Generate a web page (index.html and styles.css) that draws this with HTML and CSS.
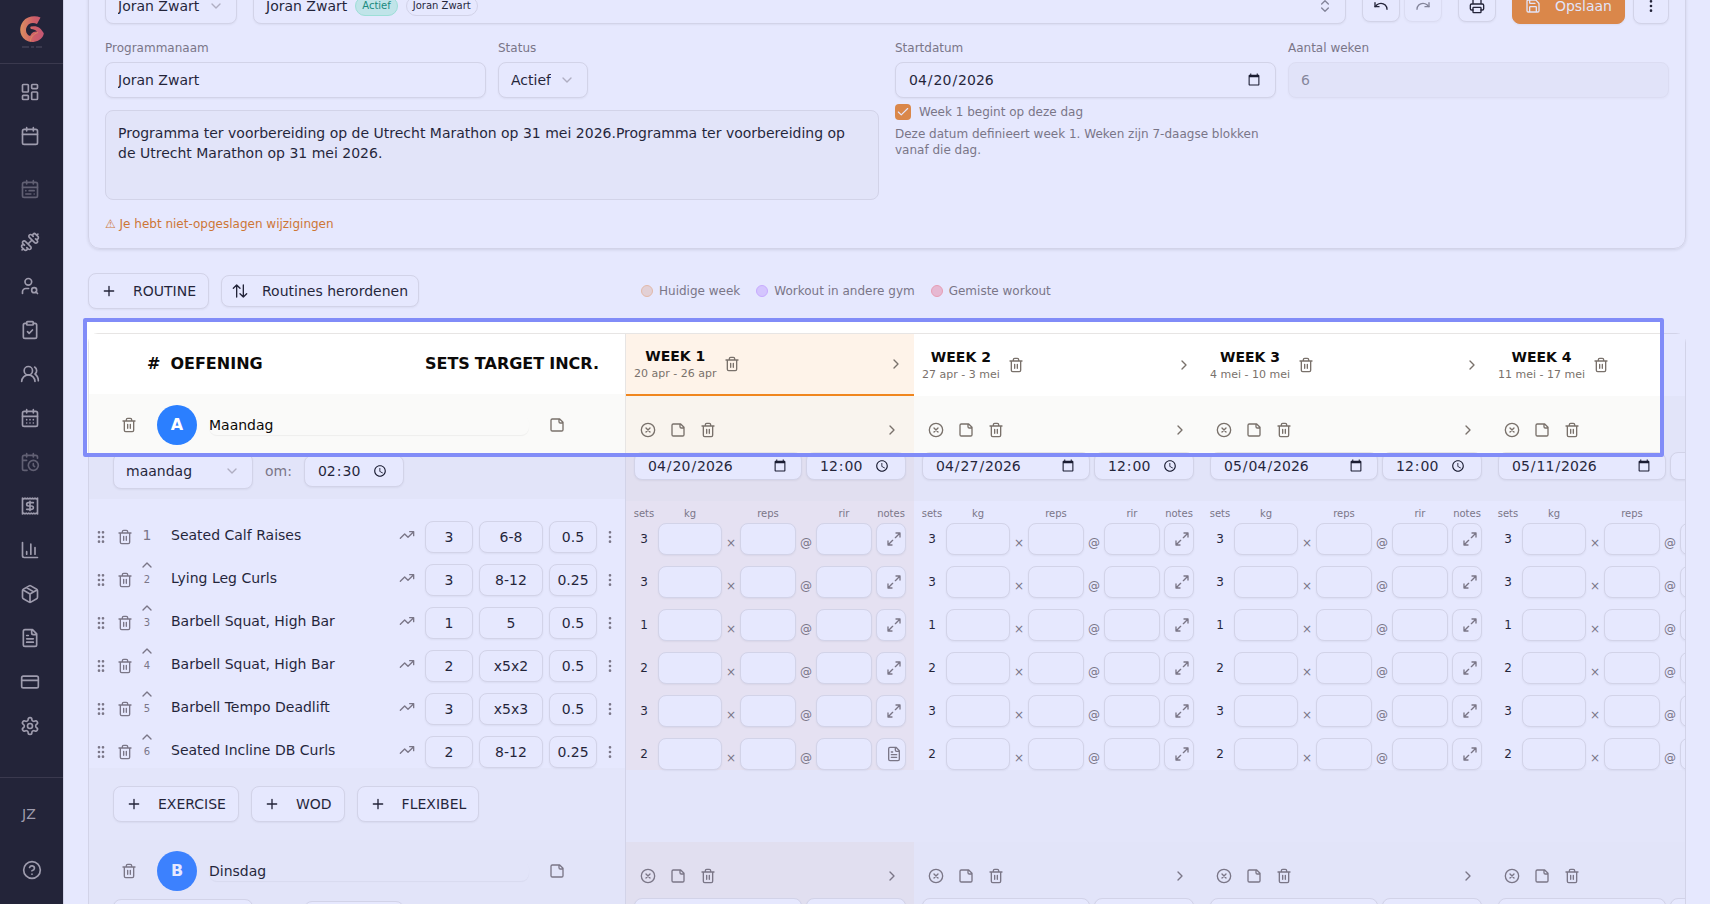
FILE: index.html
```html
<!DOCTYPE html>
<html lang="nl">
<head>
<meta charset="utf-8">
<meta name="viewport" content="width=device-width, initial-scale=1">
<title>Programma - Joran Zwart</title>
<link rel="stylesheet" href="styles.css">
</head>
<body>
<svg class="sprite" aria-hidden="true">
  <symbol id="i-dashboard" viewBox="0 0 24 24"><rect x="3" y="3" width="7" height="9" rx="1"/><rect x="14" y="3" width="7" height="5" rx="1"/><rect x="14" y="12" width="7" height="9" rx="1"/><rect x="3" y="16" width="7" height="5" rx="1"/></symbol>
  <symbol id="i-calendar" viewBox="0 0 24 24"><path d="M8 2v4M16 2v4M3 10h18"/><rect x="3" y="4" width="18" height="18" rx="2"/></symbol>
  <symbol id="i-calendar-range" viewBox="0 0 24 24"><path d="M8 2v4M16 2v4M3 10h18M7 14h.01M11 14h6M7 18h6M17 18h.01"/><rect x="3" y="4" width="18" height="18" rx="2"/></symbol>
  <symbol id="i-calendar-days" viewBox="0 0 24 24"><path d="M8 2v4M16 2v4M3 10h18M8 14h.01M12 14h.01M16 14h.01M8 18h.01M12 18h.01M16 18h.01"/><rect x="3" y="4" width="18" height="18" rx="2"/></symbol>
  <symbol id="i-calendar-clock" viewBox="0 0 24 24"><path d="M21 7.500V6a2 2 0 0 0-2-2H5a2 2 0 0 0-2 2v14a2 2 0 0 0 2 2h3.500M16 2v4M8 2v4M3 10h5M17.500 17.500 16 16.300V14"/><circle cx="16" cy="16" r="6"/></symbol>
  <symbol id="i-dumbbell" viewBox="0 0 24 24"><path d="M14.400 14.400 9.600 9.600M18.657 21.485a2 2 0 1 1-2.829-2.828l-1.767 1.768a2 2 0 1 1-2.829-2.829l6.364-6.364a2 2 0 1 1 2.829 2.829l-1.768 1.767a2 2 0 1 1 2.828 2.829zM21.500 21.500l-1.400-1.400M3.900 3.900 2.500 2.500M6.404 12.768a2 2 0 1 1-2.829-2.829l1.768-1.767a2 2 0 1 1-2.828-2.829l2.828-2.828a2 2 0 1 1 2.829 2.828l1.767-1.768a2 2 0 1 1 2.829 2.829z" transform="matrix(-1 0 0 1 24 0)"/></symbol>
  <symbol id="i-user-search" viewBox="0 0 24 24"><circle cx="10" cy="7" r="4"/><path d="M10.300 15H7a4 4 0 0 0-4 4v2M21 21l-1.900-1.900"/><circle cx="17" cy="17" r="3"/></symbol>
  <symbol id="i-clipboard" viewBox="0 0 24 24"><rect x="8" y="2" width="8" height="4" rx="1"/><path d="M16 4h2a2 2 0 0 1 2 2v14a2 2 0 0 1-2 2H6a2 2 0 0 1-2-2V6a2 2 0 0 1 2-2h2M9 14l2 2 4-4"/></symbol>
  <symbol id="i-users" viewBox="0 0 24 24"><path d="M18 21a8 8 0 0 0-16 0"/><circle cx="10" cy="8" r="5"/><path d="M22 20c0-3.370-2-6.500-4-8a5 5 0 0 0-.450-8.300"/></symbol>
  <symbol id="i-receipt" viewBox="0 0 24 24"><path d="M3 2.500l1.500 1 1.500-1 1.500 1 1.500-1 1.500 1 1.500-1 1.500 1 1.500-1 1.500 1 1.500-1 1.500 1 1.500-1v19l-1.500-1-1.500 1-1.500-1-1.500 1-1.500-1-1.500 1-1.500-1-1.500 1-1.500-1-1.500 1-1.500-1-1.500 1zM16 8h-6a2 2 0 1 0 0 4h4a2 2 0 1 1 0 4H8M12 17.500v-11"/></symbol>
  <symbol id="i-chart" viewBox="0 0 24 24"><path d="M3 3v16a2 2 0 0 0 2 2h16M18 17V9M13 17V5M8 17v-3"/></symbol>
  <symbol id="i-box" viewBox="0 0 24 24"><path d="M11 21.730a2 2 0 0 0 2 0l7-4A2 2 0 0 0 21 16V8a2 2 0 0 0-1-1.730l-7-4a2 2 0 0 0-2 0l-7 4A2 2 0 0 0 3 8v8a2 2 0 0 0 1 1.730zM12 22V12M3.300 7 12 12l8.700-5M7.500 4.270l9 5.150"/></symbol>
  <symbol id="i-file-text" viewBox="0 0 24 24"><path d="M15 2H6a2 2 0 0 0-2 2v16a2 2 0 0 0 2 2h12a2 2 0 0 0 2-2V7zM14 2v4a2 2 0 0 0 2 2h4M10 9H8M16 13H8M16 17H8"/></symbol>
  <symbol id="i-card" viewBox="0 0 24 24"><rect x="2" y="5" width="20" height="14" rx="2"/><path d="M2 10h20"/></symbol>
  <symbol id="i-settings" viewBox="0 0 24 24"><path d="M12.220 2h-.440a2 2 0 0 0-2 2v.180a2 2 0 0 1-1 1.730l-.430.250a2 2 0 0 1-2 0l-.150-.080a2 2 0 0 0-2.730.730l-.220.380a2 2 0 0 0 .730 2.730l.150.100a2 2 0 0 1 1 1.720v.510a2 2 0 0 1-1 1.740l-.150.090a2 2 0 0 0-.730 2.730l.220.380a2 2 0 0 0 2.730.730l.150-.080a2 2 0 0 1 2 0l.430.250a2 2 0 0 1 1 1.730V20a2 2 0 0 0 2 2h.440a2 2 0 0 0 2-2v-.180a2 2 0 0 1 1-1.730l.430-.250a2 2 0 0 1 2 0l.150.080a2 2 0 0 0 2.730-.730l.220-.390a2 2 0 0 0-.730-2.730l-.150-.080a2 2 0 0 1-1-1.740v-.500a2 2 0 0 1 1-1.740l.150-.090a2 2 0 0 0 .730-2.730l-.220-.380a2 2 0 0 0-2.730-.730l-.150.080a2 2 0 0 1-2 0l-.430-.250a2 2 0 0 1-1-1.730V4a2 2 0 0 0-2-2z"/><circle cx="12" cy="12" r="3"/></symbol>
  <symbol id="i-help" viewBox="0 0 24 24"><circle cx="12" cy="12" r="10"/><path d="M9.090 9a3 3 0 0 1 5.830 1c0 2-3 3-3 3M12 17h.01"/></symbol>
  <symbol id="i-chevron-down" viewBox="0 0 24 24"><path d="m6 9 6 6 6-6"/></symbol>
  <symbol id="i-chevron-up" viewBox="0 0 24 24"><path d="m18 15-6-6-6 6"/></symbol>
  <symbol id="i-chevron-right" viewBox="0 0 24 24"><path d="m9 18 6-6-6-6"/></symbol>
  <symbol id="i-chevrons" viewBox="0 0 24 24"><path d="m7 15 5 5 5-5M7 9l5-5 5 5"/></symbol>
  <symbol id="i-undo" viewBox="0 0 24 24"><path d="M3 7v6h6"/><path d="M21 17a9 9 0 0 0-9-9 9 9 0 0 0-6 2.300L3 13"/></symbol>
  <symbol id="i-redo" viewBox="0 0 24 24"><path d="M21 7v6h-6"/><path d="M3 17a9 9 0 0 1 9-9 9 9 0 0 1 6 2.300l3 2.700"/></symbol>
  <symbol id="i-printer" viewBox="0 0 24 24"><path d="M6 18H4a2 2 0 0 1-2-2v-5a2 2 0 0 1 2-2h16a2 2 0 0 1 2 2v5a2 2 0 0 1-2 2h-2M6 9V3a1 1 0 0 1 1-1h10a1 1 0 0 1 1 1v6"/><rect x="6" y="14" width="12" height="8" rx="1"/></symbol>
  <symbol id="i-save" viewBox="0 0 24 24"><path d="M15.200 3a2 2 0 0 1 1.400.600l3.800 3.800a2 2 0 0 1 .600 1.400V19a2 2 0 0 1-2 2H5a2 2 0 0 1-2-2V5a2 2 0 0 1 2-2zM17 21v-7a1 1 0 0 0-1-1H8a1 1 0 0 0-1 1v7M7 3v4a1 1 0 0 0 1 1h7"/></symbol>
  <symbol id="i-more" viewBox="0 0 24 24"><circle cx="12" cy="12" r="1"/><circle cx="12" cy="5" r="1"/><circle cx="12" cy="19" r="1"/></symbol>
  <symbol id="i-grip" viewBox="0 0 24 24"><circle cx="9" cy="12" r="1"/><circle cx="9" cy="5" r="1"/><circle cx="9" cy="19" r="1"/><circle cx="15" cy="12" r="1"/><circle cx="15" cy="5" r="1"/><circle cx="15" cy="19" r="1"/></symbol>
  <symbol id="i-check" viewBox="0 0 24 24"><path d="M20 6 9 17l-5-5"/></symbol>
  <symbol id="i-plus" viewBox="0 0 24 24"><path d="M5 12h14M12 5v14"/></symbol>
  <symbol id="i-sort" viewBox="0 0 24 24"><path d="m2 8 5-5 5 5M7 3v18M22 16l-5 5-5-5M17 21V3"/></symbol>
  <symbol id="i-trash" viewBox="0 0 24 24"><path d="M3 6h18M19 6v14c0 1-1 2-2 2H7c-1 0-2-1-2-2V6M8 6V4c0-1 1-2 2-2h4c1 0 2 1 2 2v2M10 11v6M14 11v6"/></symbol>
  <symbol id="i-note" viewBox="0 0 24 24"><path d="M16 3H5a2 2 0 0 0-2 2v14a2 2 0 0 0 2 2h14a2 2 0 0 0 2-2V8zM15 3v4a2 2 0 0 0 2 2h4"/></symbol>
  <symbol id="i-circle-x" viewBox="0 0 24 24"><circle cx="12" cy="12" r="10"/><path d="m15 9-6 6M9 9l6 6"/></symbol>
  <symbol id="i-trend" viewBox="0 0 24 24"><path d="M16 7h6v6M22 7l-8.500 8.500-5-5L2 17"/></symbol>
  <symbol id="i-expand" viewBox="0 0 24 24"><path d="M15 3h6v6M21 3l-7 7M3 21l7-7M9 21H3v-6"/></symbol>
</svg>

<div class="app">
  <aside class="sidebar">
    <a class="brand" href="#" aria-label="Home">
      <svg width="24" height="34" viewBox="0 0 24 34">
        <defs><linearGradient id="brand" x1="0" y1="0" x2="1" y2="0"><stop offset="0" stop-color="#f2913a"/><stop offset=".6" stop-color="#e25345"/><stop offset="1" stop-color="#d34a52"/></linearGradient></defs>
        <path fill="url(#brand)" d="M20.500 1.500C15 -.800 7 .200 3 5.500-1.500 11.500-.500 20 5.500 24c2.500 1.700 6 2.300 9 1.800 5-.800 9-4.300 9.300-8.500-1-1.500-2.200-3.500-4.200-5.200-1.500-1.300-3.500-1.900-5.500-1.900l-3.200.300c-.800.200-.800 2.200.200 2.400 2.300.300 4.500.800 6 2.600-2.200-.300-4.300.400-5.500 2-.800 1.100-1.200 1.800-1.500 2.400C6.800 19 5.300 15.500 6.300 12 7.500 7.500 12.500 5.700 17 8z"/>
        <path d="M10.300 25.500c.300-4.500 3-7.500 7.700-9" fill="none" stroke="#f08a3c" stroke-width="1"/>
        <path class="brand-line" d="M2 31h7M11 31h3M16 31h6"/>
      </svg>
    </a>
    <nav class="nav" aria-label="Hoofdmenu">
      <a href="#" aria-label="Dashboard"><svg class="icon-lg"><use href="#i-dashboard"/></svg></a>
      <a href="#" aria-label="Agenda"><svg class="icon-lg"><use href="#i-calendar"/></svg></a>
      <a href="#" aria-label="Rooster" class="dim tall"><svg class="icon-lg"><use href="#i-calendar-range"/></svg></a>
      <a href="#" aria-label="Training"><svg class="icon-lg"><use href="#i-dumbbell"/></svg></a>
      <a href="#" aria-label="Klant zoeken"><svg class="icon-lg"><use href="#i-user-search"/></svg></a>
      <a href="#" aria-label="Taken"><svg class="icon-lg"><use href="#i-clipboard"/></svg></a>
      <a href="#" aria-label="Leden"><svg class="icon-lg"><use href="#i-users"/></svg></a>
      <a href="#" aria-label="Planning"><svg class="icon-lg"><use href="#i-calendar-days"/></svg></a>
      <a href="#" aria-label="Afspraken" class="dim"><svg class="icon-lg"><use href="#i-calendar-clock"/></svg></a>
      <a href="#" aria-label="Facturen"><svg class="icon-lg"><use href="#i-receipt"/></svg></a>
      <a href="#" aria-label="Statistieken"><svg class="icon-lg"><use href="#i-chart"/></svg></a>
      <a href="#" aria-label="Producten"><svg class="icon-lg"><use href="#i-box"/></svg></a>
      <a href="#" aria-label="Documenten"><svg class="icon-lg"><use href="#i-file-text"/></svg></a>
      <a href="#" aria-label="Betalingen"><svg class="icon-lg"><use href="#i-card"/></svg></a>
      <a href="#" aria-label="Instellingen"><svg class="icon-lg"><use href="#i-settings"/></svg></a>
    </nav>
    <div class="sidebar-foot">
      <button class="user" type="button">JZ</button>
      <button class="help" type="button" aria-label="Help"><svg class="icon-lg"><use href="#i-help"/></svg></button>
    </div>
  </aside>

  <main class="main">
    <section class="card">
      <div class="actions">
        <span class="select-wrap">
          <select class="field select" aria-label="Klant"><option>Joran Zwart</option></select>
          <svg class="icon select-icon"><use href="#i-chevron-down"/></svg>
        </span>
        <button class="field combo" type="button">
          <span>Joran Zwart</span>
          <span class="badge badge-green">Actief</span>
          <span class="badge">Joran Zwart</span>
          <svg class="icon combo-icon"><use href="#i-chevrons"/></svg>
        </button>
        <div class="group group-tight">
          <button class="btn-icon" type="button" aria-label="Ongedaan maken"><svg class="icon"><use href="#i-undo"/></svg></button>
          <button class="btn-icon" type="button" aria-label="Opnieuw" disabled><svg class="icon"><use href="#i-redo"/></svg></button>
        </div>
        <button class="btn-icon" type="button" aria-label="Afdrukken"><svg class="icon"><use href="#i-printer"/></svg></button>
        <div class="group">
          <button class="btn btn-primary" type="button"><svg class="icon"><use href="#i-save"/></svg>Opslaan</button>
          <button class="btn-square" type="button" aria-label="Meer"><svg class="icon"><use href="#i-more"/></svg></button>
        </div>
      </div>

      <div class="details">
        <div class="pair">
          <div class="stack">
            <label class="label" for="name">Programmanaam</label>
            <input class="field" id="name" type="text" value="Joran Zwart">
          </div>
          <div class="stack stack-start">
            <label class="label" for="status">Status</label>
            <span class="select-wrap">
              <select class="field select" id="status"><option>Actief</option></select>
              <svg class="icon select-icon"><use href="#i-chevron-down"/></svg>
            </span>
          </div>
          <textarea class="field description" aria-label="Omschrijving">Programma ter voorbereiding op de Utrecht Marathon op 31 mei 2026.Programma ter voorbereiding op de Utrecht Marathon op 31 mei 2026.</textarea>
        </div>
        <div class="pair">
          <div class="stack">
            <label class="label" for="start">Startdatum</label>
            <input class="field" id="start" type="date" value="2026-04-20">
            <label class="check"><span class="check-box"><input type="checkbox" checked><svg class="check-mark"><use href="#i-check"/></svg></span>Week 1 begint op deze dag</label>
            <p class="label hint">Deze datum definieert week 1. Weken zijn 7-daagse blokken vanaf die dag.</p>
          </div>
          <div class="stack">
            <label class="label" for="weeks">Aantal weken</label>
            <input class="field" id="weeks" type="text" value="6" disabled>
          </div>
        </div>
      </div>
      <p class="warning">⚠ Je hebt niet-opgeslagen wijzigingen</p>
    </section>

    <div class="toolbar">
      <div class="toolbar-left">
        <button class="btn" type="button"><svg class="icon"><use href="#i-plus"/></svg>ROUTINE</button>
        <button class="btn btn-small" type="button"><svg class="icon"><use href="#i-sort"/></svg>Routines herordenen</button>
      </div>
      <ul class="legend">
        <li><span class="dot dot-orange"></span>Huidige week</li>
        <li><span class="dot dot-purple"></span>Workout in andere gym</li>
        <li><span class="dot dot-red"></span>Gemiste workout</li>
      </ul>
    </div>

    <section class="board">
      <div class="board-scroll">
        <div class="plan" id="plan"></div>
        <div class="weeks" id="weeks-board"></div>
      </div>
      <div class="spotlight"></div>
    </section>
  </main>
</div>
<script src="app.js"></script>
</body>
</html>
```

FILE: app.js
```js
const exercises = [
  { name: "Seated Calf Raises", sets: "3", target: "6-8", incr: "0.5" },
  { name: "Lying Leg Curls", sets: "3", target: "8-12", incr: "0.25" },
  { name: "Barbell Squat, High Bar", sets: "1", target: "5", incr: "0.5" },
  { name: "Barbell Squat, High Bar", sets: "2", target: "x5x2", incr: "0.5" },
  { name: "Barbell Tempo Deadlift", sets: "3", target: "x5x3", incr: "0.5" },
  { name: "Seated Incline DB Curls", sets: "2", target: "8-12", incr: "0.25" }
];

const weeks = [
  { nr: 1, range: "20 apr - 26 apr", start: "2026-04-20", current: true, noteOn: 5 },
  { nr: 2, range: "27 apr - 3 mei", start: "2026-04-27" },
  { nr: 3, range: "4 mei - 10 mei", start: "2026-05-04" },
  { nr: 4, range: "11 mei - 17 mei", start: "2026-05-11" }
];

const icon = (id) => `<svg class="icon"><use href="#i-${id}"/></svg>`;
const ghost = (id, label) =>
  `<button class="ghost" type="button" aria-label="${label}">${icon(id)}</button>`;
const add = (text) => `<button class="btn" type="button">${icon("plus")}${text}</button>`;

const routineHead = (letter, name, day) => `
  <div class="routine">
    <div class="routine-title">
      ${ghost("trash", "Routine verwijderen")}
      <span class="avatar">${letter}</span>
      <input class="routine-name" type="text" value="${name}" aria-label="Naam routine">
      ${ghost("note", "Notitie")}
    </div>
    <div class="routine-time">
      <span class="select-wrap day"><select class="field select" aria-label="Dag"><option>${day}</option></select>
      <svg class="icon select-icon"><use href="#i-chevron-down"/></svg></span>
      <label for="time-${letter}">om:</label>
      <input class="field time" id="time-${letter}" type="time" value="02:30">
    </div>
  </div>`;

const exerciseRow = (e, i) => `
  <li class="exercise">
    ${ghost("grip", "Verplaatsen")}
    ${ghost("trash", "Oefening verwijderen")}
    <span class="order">${i ? `<button class="ghost up" type="button" aria-label="Omhoog">${icon("chevron-up")}</button>` : ""}${i + 1}</span>
    <span class="exercise-name">${e.name}</span>
    <button class="ghost trend" type="button" aria-label="Voortgang">${icon("trend")}</button>
    <span class="numbers">
      <input class="field num" value="${e.sets}" aria-label="Sets">
      <input class="field num num-wide" value="${e.target}" aria-label="Target">
      <input class="field num" value="${e.incr}" aria-label="Increment">
    </span>
    ${ghost("more", "Meer")}
  </li>`;

document.getElementById("plan").innerHTML = `
  <div class="plan-head">
    <span>#</span><span>OEFENING</span>
    <div class="plan-head-cols"><span>SETS</span><span>TARGET</span><span>INCR.</span></div>
  </div>
  ${routineHead("A", "Maandag", "maandag")}
  <ol class="exercises">${exercises.map(exerciseRow).join("")}</ol>
  <div class="plan-foot">${add("EXERCISE")}${add("WOD")}${add("FLEXIBEL")}</div>
  ${routineHead("B", "Dinsdag", "dinsdag")}`;

const weekRoutine = (w) => `
  <div class="week-routine">
    <div class="week-icons">
      ${ghost("circle-x", "Overslaan")}${ghost("note", "Notitie")}${ghost("trash", "Verwijderen")}
      ${ghost("chevron-right", "Kopieer naar volgende week")}
    </div>
    <div class="week-date">
      <input class="field field-low" type="date" value="${w.start}" aria-label="Datum">
      <input class="field field-low" type="time" value="12:00" aria-label="Tijd">
    </div>
  </div>`;

const setRow = (w) => (e, i) => `
  <div class="set-row">
    <span class="set-count">${e.sets}</span><span></span>
    <input class="field" aria-label="kg"><span class="sep">×</span>
    <input class="field" aria-label="reps"><span class="sep">@</span>
    <input class="field" aria-label="rir"><span></span>
    <button class="field notes" type="button" aria-label="Notities">${icon(w.noteOn === i ? "file-text" : "expand")}</button>
  </div>`;

document.getElementById("weeks-board").innerHTML = weeks.map((w) => `
  <section class="week${w.current ? " week-current" : ""}">
    <header class="week-head">
      <div class="week-title"><h2>WEEK ${w.nr}</h2><p>${w.range}</p></div>
      ${ghost("trash", "Week verwijderen")}
      ${ghost("chevron-right", "Kopieer week")}
    </header>
    ${weekRoutine(w)}
    <div class="sets">
      <div class="set-labels"><span>sets</span><span></span><span>kg</span><span></span><span>reps</span><span></span><span>rir</span><span></span><span>notes</span></div>
      ${exercises.map(setRow(w)).join("")}
    </div>
    <div class="week-gap"></div>
    ${weekRoutine(w)}
  </section>`).join("");
```

FILE: styles.css
```css
* {
  box-sizing: border-box;
}

:root {
  --ink: #0c0a09;
  --muted: #79716b;
  --line: #e7e5e4;
  --soft: #fafaf9;
  --orange: #f0861e;
  --shadow: 0 1px 2px rgba(0, 0, 0, 0.06);
}

body {
  margin: 0;
  height: 100vh;
  overflow: hidden;
  background: #fff;
  color: var(--ink);
  font: 14px/20px "DejaVu Sans", sans-serif;
}

p,
h2,
ul,
ol {
  margin: 0;
  padding: 0;
  list-style: none;
}

button,
input,
select,
textarea {
  margin: 0;
  font: inherit;
  color: inherit;
}

.sprite {
  display: none;
}

.icon,
.icon-lg {
  flex: none;
  width: 16px;
  height: 16px;
  fill: none;
  stroke: currentColor;
  stroke-width: 2;
  stroke-linecap: round;
  stroke-linejoin: round;
}

.icon-lg {
  width: 20px;
  height: 20px;
}

.app {
  display: flex;
  height: 100vh;
}

/* Sidebar */
.sidebar {
  display: flex;
  flex-direction: column;
  flex: none;
  width: 64px;
  background: #0c0a09;
  border-right: 1px solid var(--line);
  color: #a6a09b;
}

.brand {
  display: flex;
  justify-content: center;
  height: 64px;
  padding-top: 16px;
  border-bottom: 1px solid #292524;
}

.brand-line {
  fill: none;
  stroke: #292524;
  stroke-width: 2;
}

.nav {
  display: flex;
  flex-direction: column;
  flex: 1;
  gap: 4px;
  padding-top: 8px;
}

.nav a {
  display: flex;
  align-items: center;
  height: 40px;
  padding-left: 20px;
  color: inherit;
}

.nav .dim svg {
  opacity: 0.5;
}

.nav .tall {
  height: 58px;
}

.sidebar-foot {
  display: flex;
  flex-direction: column;
  gap: 20px;
  padding: 18px 0 16px;
  border-top: 1px solid #292524;
}

.sidebar-foot button {
  display: flex;
  align-items: center;
  height: 36px;
  padding: 0 22px;
  border: 0;
  background: none;
}

/* Main column; the page is scrolled a little past its top */
.main {
  flex: 1;
  min-width: 0;
  margin-top: -29px;
  padding: 0 24px;
}

.card {
  display: flex;
  flex-direction: column;
  gap: 16px;
  padding: 16px;
  border: 1px solid var(--line);
  border-radius: 12px;
  box-shadow: 0 1px 3px rgba(0, 0, 0, 0.12);
}

.actions,
.group {
  display: flex;
  align-items: center;
  gap: 16px;
}

.group {
  gap: 8px;
}

.group-tight {
  gap: 4px;
}

.field {
  height: 36px;
  min-width: 0;
  padding: 0 12px;
  border: 1px solid var(--line);
  border-radius: 8px;
  background: #fff;
  box-shadow: var(--shadow);
}

.field:disabled {
  background: #f5f5f4;
  opacity: 0.5;
}

.select-wrap {
  display: inline-flex;
  position: relative;
}

.select {
  padding-right: 36px;
  appearance: none;
}

.select-icon {
  position: absolute;
  top: 10px;
  right: 13px;
  color: var(--muted);
  opacity: 0.5;
  pointer-events: none;
}

.combo {
  display: flex;
  align-items: center;
  flex: 1;
  gap: 8px;
}

.combo-icon {
  margin-left: auto;
  opacity: 0.5;
}

.badge {
  padding: 0 6px;
  border: 1px solid var(--line);
  border-radius: 10px;
  font-size: 10px;
  line-height: 18px;
}

.badge-green {
  border-color: #a4f4cf;
  background: #d0fae5;
  color: #008a60;
}

.btn-icon,
.btn-square {
  display: flex;
  align-items: center;
  justify-content: center;
  width: 38px;
  height: 32px;
  padding: 0;
  border: 1px solid var(--line);
  border-radius: 8px;
  background: #fff;
  box-shadow: var(--shadow);
}

.btn-icon:disabled {
  opacity: 0.5;
}

.btn-square {
  width: 36px;
  height: 36px;
}

.btn {
  display: flex;
  align-items: center;
  gap: 16px;
  height: 36px;
  padding: 0 12px;
  border: 1px solid var(--line);
  border-radius: 8px;
  background: #fff;
  box-shadow: var(--shadow);
  white-space: nowrap;
}

.btn-small {
  gap: 14px;
  height: 32px;
  padding: 0 10px;
}

.btn-primary {
  gap: 14px;
  border-color: var(--orange);
  background: var(--orange);
  color: #fafaf9;
}

.details {
  display: grid;
  grid-template-columns: 1fr 1fr;
  gap: 16px;
}

.pair {
  display: grid;
  grid-template-columns: 1fr 1fr;
  align-content: start;
  gap: 12px;
}

.stack {
  display: flex;
  flex-direction: column;
  gap: 6px;
}

.stack-start {
  align-items: flex-start;
}

.label,
.check,
.warning {
  color: var(--muted);
  font-size: 12px;
  line-height: 16px;
}

.description {
  grid-column: 1 / -1;
  height: 90px;
  padding: 12px;
  background: var(--soft);
  box-shadow: none;
  resize: none;
}

.check {
  display: flex;
  gap: 8px;
}

.check-box {
  display: grid;
}

.check-box > * {
  grid-area: 1 / 1;
}

.check-box input {
  width: 16px;
  height: 16px;
  border-radius: 4px;
  background: var(--orange);
  appearance: none;
}

.check-mark {
  place-self: center;
  width: 14px;
  height: 14px;
  fill: none;
  stroke: #fff;
  stroke-width: 2;
  stroke-linecap: round;
  stroke-linejoin: round;
  pointer-events: none;
}

.warning {
  color: #e17100;
}

/* Toolbar */
.toolbar {
  display: flex;
  align-items: center;
  padding: 24px 0;
}

.toolbar-left {
  display: flex;
  align-items: center;
  gap: 12px;
  width: 553px;
}

.legend {
  display: flex;
  gap: 16px;
  color: var(--muted);
  font-size: 12px;
  line-height: 16px;
}

.legend li {
  display: flex;
  align-items: center;
  gap: 6px;
}

.dot {
  width: 12px;
  height: 12px;
  border: 1px solid;
  border-radius: 50%;
}

.dot-orange {
  border-color: #fbc494;
  background: #fbe1cd;
}

.dot-purple {
  border-color: #dab2ff;
  background: #e9d4ff;
}

.dot-red {
  border-color: #ffa2a2;
  background: #ffc4c8;
}

/* Board */
.board {
  position: relative;
  border: 1px solid var(--line);
  border-radius: 10px;
}

.board-scroll {
  display: flex;
  overflow: hidden;
  background: #fff;
}

.spotlight {
  position: absolute;
  top: -16px;
  right: 21px;
  left: -6px;
  height: 139px;
  border: 4px solid #818cf8;
  border-radius: 2px;
  box-shadow: 0 0 0 9999px rgba(129, 140, 248, 0.2);
  pointer-events: none;
}

.plan {
  flex: none;
  width: 537px;
  border-right: 1px solid var(--line);
}

.plan-head {
  display: flex;
  align-items: center;
  gap: 10px;
  height: 60px;
  padding: 0 26px 0 58px;
  font-size: 16px;
  font-weight: bold;
}

.plan-head-cols {
  display: flex;
  gap: 5px;
  margin-left: auto;
}

.ghost {
  display: flex;
  align-items: center;
  justify-content: center;
  height: 28px;
  padding: 0;
  border: 0;
  background: none;
  color: var(--muted);
}

.routine {
  display: flex;
  flex-direction: column;
  gap: 8px;
  height: 105px;
  padding: 11px 24px 0;
  background: var(--soft);
}

.routine-title {
  display: flex;
  align-items: center;
}

.routine-title .ghost {
  width: 32px;
}

.avatar {
  width: 40px;
  margin: 0 12px;
  border-radius: 50%;
  background: #2b7fff;
  color: #fff;
  font-size: 16px;
  font-weight: bold;
  line-height: 40px;
  text-align: center;
}

.routine-name {
  flex: 1;
  height: 20px;
  margin-right: 12px;
  padding: 0;
  border: 0;
  border-radius: 8px;
  background: none;
  box-shadow: 0 1px 1px rgba(0, 0, 0, 0.05);
}

.routine-title .ghost:last-child {
  margin-right: 28px;
}

.routine-time {
  display: flex;
  align-items: center;
  gap: 12px;
  color: var(--muted);
}

.routine-time .field {
  color: var(--ink);
}

.day,
.day .select {
  width: 140px;
}

.time {
  width: 100px;
  height: 32px;
}

.exercises {
  display: flex;
  flex-direction: column;
  gap: 11px;
  padding-top: 22px;
}

.exercise {
  display: grid;
  grid-template-columns: 24px 24px 20px 1fr 26px 172px 26px;
  align-items: center;
  height: 32px;
  padding-right: 2px;
}

.order {
  display: flex;
  flex-direction: column;
  align-items: center;
  align-self: start;
  gap: 1px;
  padding-top: 10px;
  color: var(--muted);
  font-size: 10px;
  line-height: 12px;
}

.exercise:first-child .order {
  padding-top: 8px;
  font-size: 14px;
}

.up {
  height: 16px;
  margin-top: -17px;
}

.exercise-name {
  padding: 0 0 4px 14px;
}

.exercise .trend {
  justify-content: flex-start;
  padding-bottom: 4px;
}

.numbers {
  display: grid;
  grid-template-columns: 48px 64px 48px;
  gap: 6px;
}

.num {
  width: 100%;
  height: 32px;
  padding: 0;
  text-align: center;
}

.plan-foot {
  display: flex;
  gap: 12px;
  padding: 18px 24px;
  background: #fcfcfb;
}

/* Week columns */
.weeks {
  display: flex;
  flex: 1;
  min-width: 0;
}

.week {
  flex: none;
  width: 288px;
}

.week-head {
  display: flex;
  align-items: center;
  height: 62px;
  padding: 0 4px 0 8px;
}

.week-title {
  margin-right: 2px;
  text-align: center;
}

.week-title h2 {
  font-size: 14px;
  line-height: 20px;
}

.week-title p {
  color: var(--muted);
  font-size: 11px;
  line-height: 16px;
}

.week .ghost {
  width: 28px;
}

.week .ghost:last-child {
  margin-left: auto;
}

.week-routine {
  display: flex;
  flex-direction: column;
  gap: 8px;
  height: 105px;
  padding: 20px 8px 0;
  background: var(--soft);
}

.week-icons {
  display: flex;
  gap: 2px;
}

.week-date {
  display: grid;
  grid-template-columns: 168px 100px;
  gap: 4px;
}

.field-low {
  height: 28px;
}

.sets {
  display: flex;
  flex-direction: column;
  gap: 11px;
  padding: 7px 8px 0;
}

.set-labels,
.set-row {
  display: grid;
  grid-template-columns: 20px 4px 64px 18px 56px 20px 56px 4px 30px;
  height: 32px;
}

.set-labels {
  height: 12px;
  margin-bottom: -8px;
  color: var(--muted);
  font-size: 10px;
  line-height: 12px;
}

.set-labels span {
  justify-self: center;
}

.set-row .field {
  width: 100%;
  height: 32px;
}

.set-count {
  font-size: 12px;
  line-height: 32px;
  text-align: center;
}

.sep {
  align-self: end;
  padding-bottom: 4px;
  color: var(--muted);
  font-size: 12px;
  line-height: 16px;
  text-align: center;
}

.set-row .notes {
  display: flex;
  align-items: center;
  padding: 0 0 0 9px;
  color: var(--muted);
}

.week-gap {
  height: 72px;
  background: #fcfcfb;
}

.week-current .week-head {
  border-bottom: 2px solid var(--orange);
  background: #fef3e9;
}

.week-current .week-routine {
  background: #f9f4ee;
}

.week-current .sets {
  background: #fef7f1;
}
```
